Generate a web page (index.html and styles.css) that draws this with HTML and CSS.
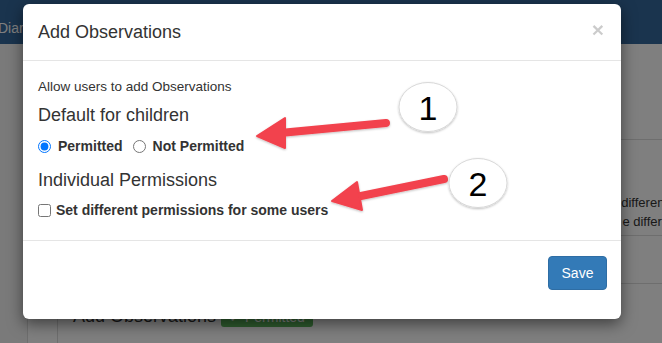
FILE: index.html
```html
<!DOCTYPE html>
<html lang="en">
<head>
<meta charset="UTF-8" />
<title>Add Observations</title>
<link rel="stylesheet" href="styles.css">
</head>
<body>
<div class="page">
  <nav class="navbar"><span class="brand">Diary</span></nav>
  <div class="content">
    <div class="rail"></div>
    <div class="rail"></div>
    <main class="main">
      <div class="row row-top"></div>
      <div class="row row-text">
        <p class="l1">different</p>
        <p class="l2">e different</p>
      </div>
      <div class="row row-mid"></div>
      <h3 class="section">Add Observations <span class="badge">&#10003; Permitted</span></h3>
    </main>
  </div>
</div>

<div class="backdrop"></div>

<div class="modal">
  <div class="modal-header">
    <h4 class="modal-title">Add Observations</h4>
    <span class="close">&times;</span>
  </div>
  <div class="modal-body">
    <p class="hint">Allow users to add Observations</p>
    <h4>Default for children</h4>
    <div class="options">
      <label><input type="radio" name="def" checked> Permitted</label>
      <label><input type="radio" name="def"> Not Permitted</label>
    </div>
    <h4>Individual Permissions</h4>
    <div class="options single">
      <label><input type="checkbox"> Set different permissions for some users</label>
    </div>
  </div>
  <div class="modal-footer">
    <button class="btn-save">Save</button>
  </div>
</div>

<svg class="notes" width="662" height="343" viewBox="0 0 662 343">
  <defs>
    <filter id="sh" x="-20%" y="-20%" width="140%" height="140%">
      <feDropShadow dx="0" dy="1" stdDeviation="1.2" flood-color="#000" flood-opacity="0.25"/>
    </filter>
  </defs>
  <g fill="#f2424d" stroke="#f2424d" filter="url(#sh)">
    <line x1="386" y1="123" x2="280" y2="133" stroke-width="8" stroke-linecap="round"/>
    <polygon points="257,136 285,118 285,148" stroke-width="2" stroke-linejoin="round"/>
    <line x1="444" y1="179" x2="356" y2="197" stroke-width="8" stroke-linecap="round"/>
    <polygon points="332,201 357,182 362,210" stroke-width="2" stroke-linejoin="round"/>
  </g>
  <g filter="url(#sh)">
    <ellipse cx="428" cy="107" rx="29" ry="24.5" fill="#fff" stroke="#d8d8d8" stroke-width="1"/>
    <ellipse cx="478" cy="183" rx="29" ry="24.5" fill="#fff" stroke="#d8d8d8" stroke-width="1"/>
  </g>
  <text x="428" y="120" class="num">1</text>
  <text x="478" y="196" class="num">2</text>
</svg>
</body>
</html>
```

FILE: styles.css
```css
body {
  margin: 0; font-family: "Liberation Sans", Arial, Helvetica, sans-serif; font-size: 14px; color: #333; background: #fff; width: 662px; height: 343px; overflow: hidden; position: relative;
}
.page {
  height: 343px;
}
.navbar {
  background: #35699c; height: 44px; display: flex; align-items: center;
}
.brand {
  color: #fff; font-size: 14px; margin-left: -2px; margin-top: 12px;
}
.content {
  display: flex; height: 299px;
}
.rail {
  width: 27px; border-right: 1px solid #ddd; background: #f4f4f4;
}
.rail + .rail {
  width: 29px; background: #fff;
}
.main {
  flex-grow: 1;
  display: flex;
  flex-direction: column;
  padding-left: 15px;
}
.row {
  border-bottom: 1px solid #ddd;
}
.row-top {
  height: 95px;
}
.row-text {
  height: 96px;
  display: flex;
  flex-direction: column;
  align-items: flex-end;
  justify-content: flex-end;
  padding-bottom: 4px;
  box-sizing: border-box;
  font-size: 13px;
}
.row-text p {
  margin: 0; line-height: 19px; white-space: nowrap;
}
.row-text .l1 {
  margin-right: -6px;
}
.row-text .l2 {
  margin-right: -18px;
}
.row-mid {
  height: 47px;
}
.section {
  margin: 22px 0 0; font-size: 18px; font-weight: 400;
}
.badge {
  display: inline-block; background: #5cb85c; color: #fff; font-size: 14px; padding: 2px 8px; border-radius: 3px;
}
.backdrop {
  position: absolute; inset: 0; background: rgba(0, 0, 0, 0.5);
}
.modal {
  position: absolute;
  left: 23px; top: 4px;
  width: 598px; height: 315px;
  background: #fff;
  border-radius: 6px;
  box-shadow: 0 5px 15px rgba(0, 0, 0, 0.5);
  display: flex;
  flex-direction: column;
}
.modal-header {
  padding: 15px;
  border-bottom: 1px solid #e5e5e5;
  display: flex;
  justify-content: space-between;
  align-items: center;
}
.modal-title {
  margin: 0; font-size: 18px; font-weight: 400; line-height: 26px;
}
.close {
  font-size: 21px; font-weight: 700; color: #000; opacity: 0.2; margin-top: -4px; margin-right: 2px;
}
.modal-body {
  padding: 16px 15px 15px;
  height: 148px;
}
.modal-body h4 {
  font-size: 18px; font-weight: 400; margin: 8px 0 11px; line-height: 20px;
}
.hint {
  margin: 0; line-height: 20px; font-size: 13.5px;
}
.options {
  display: flex; gap: 10px; line-height: 20px;
}
.options + h4 {
  margin-top: 14px !important;
}
.options label {
  font-weight: 700; display: flex; align-items: center; gap: 5px;
}
.options.single label {
  gap: 3px;
}
.options input {
  margin: 0 2px 0 0; width: 13px; height: 13px;
}
.modal-body h4 + .options {
  margin-top: 2px;
}
.modal-body h4 + .single {
  margin-top: -1px;
}
.modal-footer {
  border-top: 1px solid #e5e5e5;
  padding: 15px 14px;
  display: flex;
  justify-content: flex-end;
}
.btn-save {
  background: #337ab7;
  border: 1px solid #2e6da4;
  color: #fff;
  font-family: inherit;
  font-size: 14px;
  padding: 6px 12px;
  height: 34px;
  width: 59px;
  border-radius: 4px;
}
.notes {
  position: absolute; left: 0; top: 0;
}
.num {
  font-family: "Liberation Sans", Arial, sans-serif; font-size: 34px; text-anchor: middle; fill: #000;
}
```
